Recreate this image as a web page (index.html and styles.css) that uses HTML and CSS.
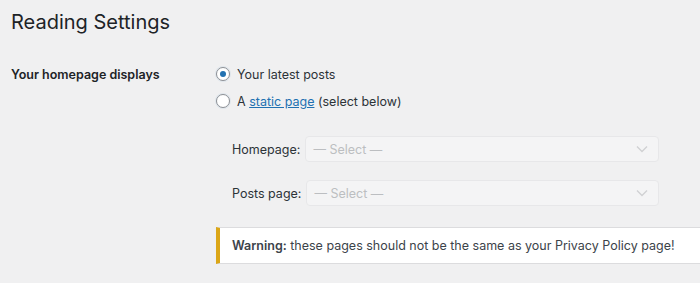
FILE: index.html
```html
<!DOCTYPE html>
<html lang="en">
<head>
    <meta charset="UTF-8">
    <meta name="viewport" content="width=device-width, initial-scale=1.0">
    <title>Reading Settings</title>
    <link rel="stylesheet" href="styles.css">
</head>
<body>
    <div class="wrap">
        <h1>Reading Settings</h1>

        <div class="setting-row">
            <div class="setting-label">Your homepage displays</div>
            <div class="setting-field">
                <label class="radio-line">
                    <input type="radio" name="show_on_front" value="posts" checked>
                    <span>Your latest posts</span>
                </label>
                <label class="radio-line">
                    <input type="radio" name="show_on_front" value="page">
                    <span>A <a href="#">static page</a> (select below)</span>
                </label>

                <div class="page-selects">
                    <div class="select-line">
                        <label for="page_on_front">Homepage:</label>
                        <select id="page_on_front" disabled>
                            <option>— Select —</option>
                        </select>
                    </div>
                    <div class="select-line">
                        <label for="page_for_posts">Posts page:</label>
                        <select id="page_for_posts" class="posts-select" disabled>
                            <option>— Select —</option>
                        </select>
                    </div>
                </div>

                <div class="notice-warning">
                    <p><strong>Warning:</strong> these pages should not be the same as your Privacy Policy page!</p>
                </div>
            </div>
        </div>
    </div>
</body>
</html>
```

FILE: styles.css
```css
body {
    font-family: "Inter", "Liberation Sans", sans-serif;
    font-size: 12.5px;
    color: #1d2327;
    background: #f0f0f1;
    margin: 0;
    overflow: hidden;
}

.wrap {
    padding: 0 0 0 11px;
}

h1 {
    font-size: 20px;
    font-weight: 400;
    color: #1d2327;
    margin: 0;
    padding: 10px 0 0;
    line-height: 25px;
}

.setting-row {
    display: grid;
    grid-template-columns: 205px 1fr;
    margin-top: 28px;
}

.setting-label {
    font-weight: 600;
    line-height: 22px;
    padding-top: 1px;
}

.radio-line {
    display: flex;
    align-items: center;
    gap: 7px;
    height: 22px;
    margin-bottom: 5px;
    color: #2c3338;
}

.radio-line a {
    color: #2271b1;
}

/* radios dessinés à la main */
input[type="radio"] {
    appearance: none;
    -webkit-appearance: none;
    width: 14px;
    height: 14px;
    margin: 0;
    border: 1px solid #8c8f94;
    border-radius: 50%;
    background: #fff;
    box-sizing: border-box;
    display: grid;
    place-items: center;
    box-shadow: 0 0 0 1px rgba(34, 113, 177, 0.08);
}

input[type="radio"]:checked::before {
    content: "";
    width: 6px;
    height: 6px;
    border-radius: 50%;
    background: #2271b1;
}

.page-selects {
    padding: 19px 0 0 16px;
}

.select-line {
    display: flex;
    align-items: center;
    gap: 5px;
    margin-bottom: 18px;
    color: #2c3338;
}

.select-line:last-child {
    margin-bottom: 0;
}

select {
    appearance: none;
    -webkit-appearance: none;
    width: 354px;
    height: 26px;
    font-family: inherit;
    font-size: 12.5px;
    color: #a7aaad;
    background: #f6f7f7 url("data:image/svg+xml;utf8,<svg xmlns='http://www.w3.org/2000/svg' width='12' height='8' viewBox='0 0 12 8'><path d='M1 1.5l5 5 5-5' fill='none' stroke='%23c3c4c7' stroke-width='1.3'/></svg>") no-repeat right 10px center;
    border: 1px solid #e4e4e6;
    border-radius: 4px;
    padding: 0 24px 0 7px;
    margin: 0;
}

.posts-select {
    width: 353px;
}

.notice-warning {
    background: #fff;
    border: 1px solid #dcdcde;
    border-left: 4px solid #dba617;
    border-right: none;
    box-shadow: 0 1px 1px rgba(0, 0, 0, 0.04);
    margin-top: 21px;
    padding: 0 0 0 12px;
}

.notice-warning p {
    margin: 0;
    line-height: 35px;
    color: #3c434a;
}

.notice-warning strong {
    font-weight: 600;
}
```
